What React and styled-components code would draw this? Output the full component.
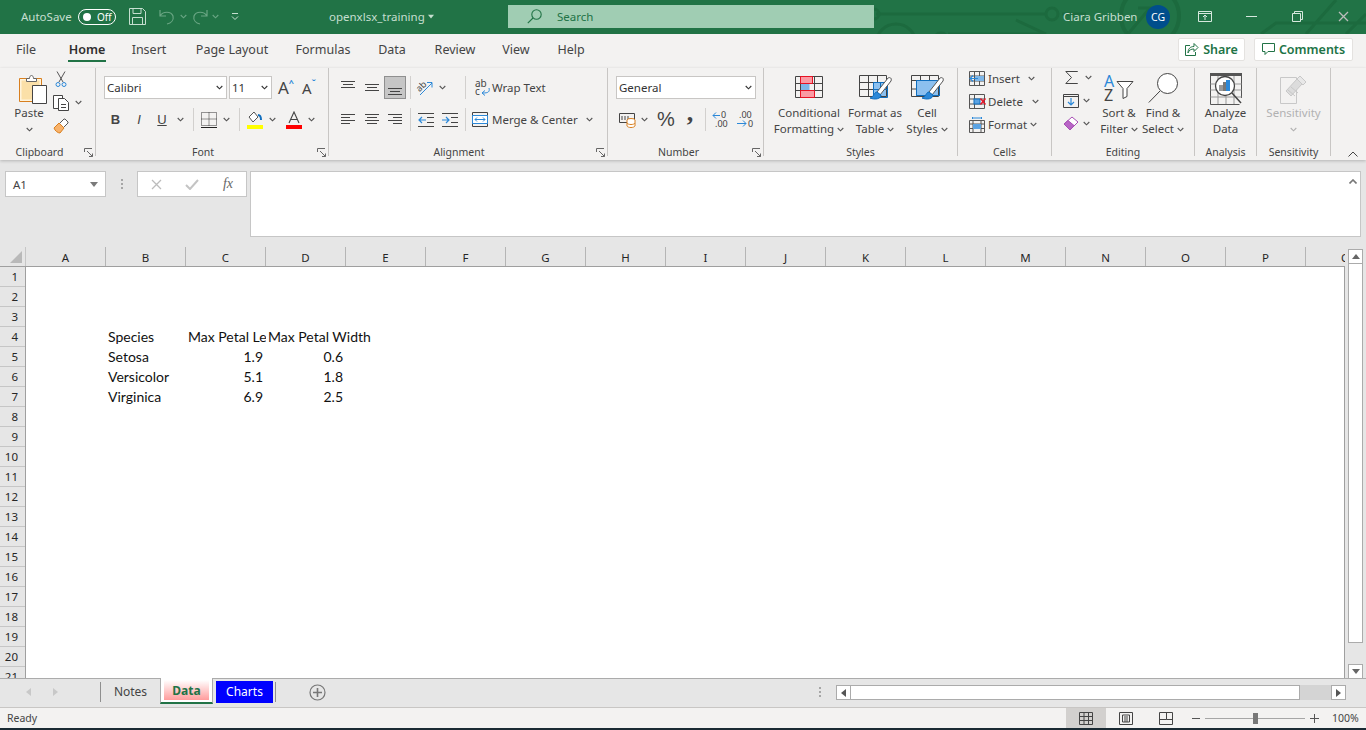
import React from 'react';
import styled, {createGlobalStyle} from 'styled-components';

const green = '#217346';
const ribbonBg = '#f3f2f1';
const chromeBg = '#e6e6e6';
const lineGrey = '#ababab';
const textGrey = '#444444';
const uiFont = '"Noto Sans", "Open Sans", sans-serif';

const Global = createGlobalStyle`
    html, body {
        margin: 0;
        padding: 0;
        height: 100%;
        overflow: hidden;
        background: ${chromeBg};
        font-family: ${uiFont};
    }
    * { box-sizing: border-box; }
`;

const Page = styled.div`
    width: 1366px;
    height: 730px;
    display: flex;
    flex-direction: column;
    overflow: hidden;
`;

/* ---------- title bar ---------- */

const TitleBar = styled.div`
    position: relative;
    flex: 0 0 34px;
    display: flex;
    align-items: center;
    padding-bottom: 1px;
    background: ${green};
    color: #c6dfd0;
    font-size: 11.5px;
    overflow: hidden;
`;

const Circuit = styled.svg`
    position: absolute;
    left: 866px;
    top: 0;
`;

const TitleCell = styled.div`
    position: relative;
    flex: 0 0 ${p => p.$w}px;
    display: flex;
    align-items: center;
    justify-content: ${p => p.$left ? 'flex-start' : 'center'};
    white-space: nowrap;
`;

const Toggle = styled.div`
    position: relative;
    flex: 0 0 38px;
    height: 16px;
    border: 1px solid #fff;
    border-radius: 8px;
    display: flex;
    align-items: center;
    padding-left: 4px;
    gap: 6px;
    color: #fff;
    font-size: 10px;
    &::before {
        content: '';
        width: 8px;
        height: 8px;
        border-radius: 50%;
        background: #fff;
    }
`;

const SearchBox = styled.div`
    position: relative;
    flex: 0 0 366px;
    height: 23px;
    display: flex;
    align-items: center;
    padding-left: 19px;
    gap: 15px;
    background: #a0cdb3;
    color: ${green};
    font-size: 11.5px;
`;

const Avatar = styled.div`
    position: relative;
    flex: 0 0 24px;
    height: 24px;
    border-radius: 50%;
    background: #004e8c;
    color: #fff;
    font-size: 10.5px;
    display: flex;
    align-items: center;
    justify-content: center;
`;

/* ---------- tab row ---------- */

const TabRow = styled.div`
    flex: 0 0 34px;
    display: flex;
    align-items: center;
    padding-bottom: 4px;
    background: ${ribbonBg};
    color: ${textGrey};
`;

const Tab = styled.div`
    position: relative;
    flex: 0 0 ${p => p.$w}px;
    height: 26px;
    margin-left: ${p => p.$ml || 0}px;
    line-height: 28px;
    text-align: center;
    font-size: 12.5px;
    white-space: nowrap;
    font-weight: ${p => p.$active ? 600 : 400};
    color: ${p => p.$active ? '#2f2f2f' : textGrey};
    ${p => p.$active && `
        &::after {
            content: '';
            position: absolute;
            left: 0;
            right: 0;
            bottom: 0;
            height: 2px;
            background: ${green};
        }
    `}
`;

const Spacer = styled.div`
    flex: ${p => p.$w ? `0 0 ${p.$w}px` : 1};
`;

const ActionButton = styled.div`
    flex: 0 0 ${p => p.$w}px;
    height: 23px;
    display: flex;
    align-items: center;
    justify-content: center;
    gap: 4px;
    background: #fff;
    border: 1px solid #e4e2e0;
    border-radius: 2px;
    color: ${green};
    font-size: 12.5px;
    font-weight: 600;
`;

/* ---------- ribbon ---------- */

const Ribbon = styled.div`
    position: relative;
    flex: 0 0 92px;
    display: flex;
    background: ${ribbonBg};
    box-shadow: 0 1px 3px rgba(0, 0, 0, 0.22);
    z-index: 1;
`;

const Group = styled.div`
    position: relative;
    flex: 0 0 ${p => p.$w}px;
    display: flex;
    flex-direction: column;
    padding-right: 1px;
    &::after {
        content: '';
        position: absolute;
        right: 0;
        top: 0;
        bottom: 4px;
        width: 1px;
        background: #c8c6c4;
    }
`;

const GroupBody = styled.div`
    flex: 1;
    display: flex;
    padding-left: ${p => p.$pad || 0}px;
    min-height: 0;
`;

const GroupLabel = styled.div`
    flex: 0 0 16px;
    line-height: 16px;
    padding-right: ${p => p.$shift || 0}px;
    text-align: center;
    font-size: 10.5px;
    color: ${textGrey};
`;

const Launcher = styled.svg`
    position: absolute;
    right: 3px;
    top: 80px;
`;

const Rows = styled.div`
    display: flex;
    flex-direction: column;
    margin-top: ${p => p.$top ?? 8}px;
    gap: ${p => p.$gap ?? 9}px;
    flex: ${p => p.$w ? `0 0 ${p.$w}px` : '0 1 auto'};
`;

const Row = styled.div`
    height: ${p => p.$h || 23}px;
    display: flex;
    align-items: center;
    font-size: 11.5px;
    color: ${textGrey};
    white-space: nowrap;
`;

const Cell = styled.div`
    flex: 0 0 ${p => p.$w}px;
    height: 100%;
    display: flex;
    align-items: center;
    justify-content: center;
    ${p => p.$on && `
        background: #c6c6c6;
        border: 1px solid #8f8f8f;
    `}
`;

const VSep = styled.div`
    flex: 0 0 ${p => p.$w || 1}px;
    display: flex;
    justify-content: center;
    height: 100%;
    &::before {
        content: '';
        width: 1px;
        background: #d2d0ce;
    }
`;

const Select = styled.div`
    flex: 0 0 ${p => p.$w}px;
    height: 23px;
    margin-right: ${p => p.$mr || 0}px;
    display: flex;
    align-items: center;
    justify-content: space-between;
    padding: 0 3px 0 2px;
    background: #fff;
    border: 1px solid #c8c6c4;
    font-size: 11.5px;
    color: #333;
`;

const BigButton = styled.div`
    flex: 0 0 ${p => p.$w}px;
    display: flex;
    flex-direction: column;
    align-items: center;
    padding-top: 4px;
    padding-left: ${p => p.$pad || 0}px;
    font-size: 11.5px;
    line-height: 16px;
    white-space: nowrap;
    color: ${p => p.$off ? '#b1b1b1' : textGrey};
`;

const BigIcon = styled.div`
    height: 33px;
    display: flex;
    align-items: center;
    justify-content: center;
`;

const PasteIcon = styled(BigIcon)`
    padding-left: 8px;
`;

const Line = styled.div`
    height: 16px;
    display: flex;
    align-items: center;
    gap: 3px;
`;

const Collapse = styled.svg`
    position: absolute;
    right: 8px;
    bottom: 3px;
`;

const Percent = styled.span`
    font-family: "Liberation Sans", sans-serif;
    font-size: 20px;
    color: #444;
`;

/* ---------- formula bar ---------- */

const FormulaBar = styled.div`
    flex: 0 0 87px;
    display: flex;
    align-items: flex-start;
    padding: 11px 5px 0;
    background: ${chromeBg};
`;

const NameBox = styled.div`
    flex: 0 0 101px;
    height: 26px;
    display: flex;
    align-items: center;
    justify-content: space-between;
    padding: 0 7px;
    background: #fff;
    border: 1px solid #c6c6c6;
    font-size: 11.5px;
    color: #444;
`;

const Grip = styled.div`
    flex: 0 0 31px;
    height: 26px;
    display: flex;
    align-items: center;
    justify-content: center;
`;

const FormulaButtons = styled.div`
    flex: 0 0 110px;
    height: 26px;
    display: flex;
    align-items: center;
    background: #fff;
    border: 1px solid #c6c6c6;
`;

const FormulaButton = styled.div`
    flex: 1;
    display: flex;
    justify-content: center;
    align-items: center;
    color: #666;
    font-family: "Liberation Serif", serif;
    font-style: italic;
    font-size: 14px;
`;

const FormulaInput = styled.div`
    flex: 0 0 1111px;
    height: 66px;
    margin-left: 3px;
    display: flex;
    justify-content: flex-end;
    align-items: flex-start;
    padding: 7px 3px;
    background: #fff;
    border: 1px solid #c6c6c6;
`;

/* ---------- sheet ---------- */

const Sheet = styled.div`
    flex: 0 0 431px;
    display: flex;
    overflow: hidden;
    background: ${chromeBg};
`;

const SheetMain = styled.div`
    flex: 0 0 1345px;
    display: flex;
    flex-direction: column;
    min-width: 0;
`;

const ColHeaders = styled.div`
    flex: 0 0 20px;
    display: flex;
    overflow: hidden;
    border-bottom: 1px solid #9f9f9f;
`;

const Corner = styled.div`
    flex: 0 0 26px;
    display: flex;
    align-items: flex-end;
    justify-content: flex-end;
    padding: 0 3px 3px 0;
    border-right: 1px solid #c6c6c6;
`;

const ColHeader = styled.div`
    flex: 0 0 80px;
    text-align: center;
    line-height: 21px;
    font-size: 11.5px;
    color: #262626;
    border-right: 1px solid #b5b5b5;
`;

const GridBody = styled.div`
    flex: 1;
    display: flex;
    min-height: 0;
    overflow: hidden;
`;

const RowHeaders = styled.div`
    flex: 0 0 26px;
    display: flex;
    flex-direction: column;
    border-right: 1px solid #9f9f9f;
`;

const RowHeader = styled.div`
    flex: 0 0 20px;
    min-height: 0;
    padding-right: 7px;
    text-align: right;
    line-height: 19px;
    font-size: 11.5px;
    color: #262626;
    border-bottom: 1px solid #c6c6c6;
`;

const Cells = styled.div`
    flex: 1;
    background: #fff;
    display: grid;
    grid-template-columns: repeat(16, 80px);
    grid-auto-rows: 20px;
    border-right: 1px solid #9f9f9f;
`;

const DataCell = styled.div`
    grid-column: ${p => p.$col};
    grid-row: ${p => p.$row};
    padding: 0 ${p => p.$num ? 3 : 2}px 0 2px;
    font-family: Lato, "Liberation Sans", sans-serif;
    font-size: 14px;
    line-height: 20px;
    white-space: nowrap;
    color: #111;
    text-align: ${p => p.$num ? 'right' : 'left'};
    overflow: ${p => p.$clip ? 'hidden' : 'visible'};
`;

const VScroll = styled.div`
    flex: 0 0 21px;
    display: flex;
    flex-direction: column;
    align-items: center;
    padding-top: 2px;
`;

const ScrollBtn = styled.div`
    flex: 0 0 ${p => p.$size}px;
    height: 15px;
    width: ${p => p.$wide || 15}px;
    display: flex;
    align-items: center;
    justify-content: center;
    background: #fff;
    border: 1px solid #ababab;
`;

const VThumb = styled.div`
    flex: 0 0 379px;
    width: 15px;
    background: #fff;
    border: 1px solid #ababab;
    border-top: 0;
`;

const VTrack = styled.div`
    flex: 0 0 21px;
`;

/* ---------- sheet tabs ---------- */

const TabStrip = styled.div`
    position: relative;
    flex: 0 0 29px;
    display: flex;
    align-items: flex-start;
    background: ${chromeBg};
    border-top: 1px solid ${lineGrey};
`;

const NavArrows = styled.div`
    flex: 0 0 100px;
    height: 26px;
    display: flex;
    align-items: center;
    padding-left: 26px;
    gap: 22px;
`;

const SheetTab = styled.div`
    flex: 0 0 ${p => p.$w}px;
    height: 20px;
    margin-top: 3px;
    border-left: 1px solid #8f8f8f;
    text-align: center;
    line-height: 20px;
    font-size: 12px;
    color: #444;
`;

const ActiveTab = styled.div`
    flex: 0 0 53px;
    height: 26px;
    margin-top: -1px;
    padding: 2px 3px;
    background: #fff;
    border: 1px solid ${lineGrey};
    border-top: 0;
    border-bottom: 2px solid ${green};
    & > div {
        height: 100%;
        background: linear-gradient(#ffffff, #ff9c9c);
        text-align: center;
        line-height: 22px;
        font-size: 12px;
        font-weight: 700;
        color: ${green};
    }
`;

const ColorTab = styled.div`
    flex: 0 0 57px;
    height: 22px;
    margin: 2px 2px 0 3px;
    background: ${p => p.$color};
    color: #fff;
    text-align: center;
    line-height: 21px;
    font-size: 12px;
`;

const TabDivider = styled.div`
    flex: 0 0 1px;
    height: 20px;
    margin-top: 3px;
    background: #8f8f8f;
`;

const AddSheet = styled.div`
    flex: 0 0 83px;
    height: 26px;
    display: flex;
    align-items: center;
    justify-content: center;
`;

const HScroll = styled.div`
    position: absolute;
    left: 836px;
    top: 6px;
    width: 510px;
    height: 15px;
    display: flex;
`;

const HThumb = styled.div`
    flex: 0 0 449px;
    background: #fff;
    border: 1px solid ${lineGrey};
    border-left: 0;
`;

const HTrack = styled.div`
    flex: 0 0 31px;
    background: #d4d4d4;
`;

const Dots = styled.div`
    position: absolute;
    left: 819px;
    top: 8px;
    display: flex;
`;

/* ---------- status bar ---------- */

const StatusBar = styled.div`
    flex: 0 0 21px;
    display: flex;
    align-items: stretch;
    background: ${ribbonBg};
    border-top: 1px solid #c8c6c4;
    font-size: 10.5px;
    color: #444;
`;

const StatusText = styled.div`
    padding-left: 7px;
    line-height: 20px;
    flex: 0 0 1066px;
`;

const ViewBtn = styled.div`
    flex: 0 0 40px;
    display: flex;
    align-items: center;
    justify-content: center;
    background: ${p => p.$on ? '#d2d0ce' : 'transparent'};
`;

const ZoomControl = styled.div`
    flex: 1;
    display: flex;
    align-items: center;
    padding-left: 6px;
    gap: 5px;
`;

const Slider = styled.div`
    position: relative;
    flex: 0 0 100px;
    height: 1px;
    background: #a6a6a6;
    &::after {
        content: '';
        position: absolute;
        left: 48px;
        top: -5px;
        width: 5px;
        height: 11px;
        background: #777;
    }
`;

const BottomEdge = styled.div`
    flex: 0 0 3px;
    background: #1a2a33;
`;

/* ---------- icons ---------- */

const Chev = ({c = '#555', s = 7}) => (
    <svg width={s} height={s - 2} viewBox="0 0 7 5"><path d="M.7 1 3.500 3.800 6.300 1" fill="none" stroke={c} strokeWidth="1.1"/></svg>
);

const CaretDown = ({c = '#7a7a7a', w = 8}) => (
    <svg width={w} height="5" viewBox="0 0 8 5"><path d="M0 0h8L4 5z" fill={c}/></svg>
);

const DialogMark = () => (
    <Launcher width="9" height="9" viewBox="0 0 9 9">
        <path d="M.5 4V.5H8M8.500 8.500H5M3 3l5 5M5.500 8.500h3v-3" fill="none" stroke="#666"/>
    </Launcher>
);

const LinesIcon = ({lines}) => (
    <svg width="16" height="16" viewBox="0 0 16 16">
        {lines.map(([x1, x2, yy], i) => <path key={i} d={`M${x1} ${yy}.5H${x2}`} stroke="#444"/>)}
    </svg>
);

const Save = () => (
    <svg width="17" height="17" viewBox="0 0 17 17" fill="none" stroke="#c6dfd0">
        <path d="M.5.500h13l3 3v13H.5zM4 .5v5h8v-5M3.500 16.500v-7h10v7"/>
    </svg>
);

const Undo = ({flip}) => (
    <svg width="16" height="16" viewBox="0 0 16 16" fill="none" stroke="#6aa684" strokeWidth="1.2" style={{transform: flip ? 'scaleX(-1)' : 'none'}}>
        <path d="M1 1v6h6M1 7c3-5 11-5 13 0 1 4-2 7-6 8"/>
    </svg>
);

const Customize = () => (
    <svg width="8" height="8" viewBox="0 0 8 8" fill="none" stroke="#c6dfd0"><path d="M1 .5h6M1 3.500l3 3 3-3"/></svg>
);

const SearchGlass = () => (
    <svg width="15" height="15" viewBox="0 0 15 15" fill="none" stroke={green} strokeWidth="1.1">
        <circle cx="9.500" cy="5.500" r="4.700"/><path d="M6 9 .8 14.200"/>
    </svg>
);

const CircuitArt = () => (
    <Circuit width="500" height="34" viewBox="0 0 500 34" fill="none" stroke="#1c6a3e" strokeWidth="3">
        <path d="M10 14H180M196 14H220"/>
        <circle cx="186" cy="14" r="6"/>
        <circle cx="8" cy="14" r="5"/>
        <circle cx="30" cy="44" r="20"/>
        <circle cx="75" cy="40" r="7"/>
        <path d="M82 34H180M150 20l30 14"/>
        <circle cx="284" cy="16" r="29" strokeWidth="4"/>
        <path d="M262 34 284 8M272 8h14v12"/>
        <path d="M395 34l15-11H500M440 34l30-34M480 34l20-20"/>
    </Circuit>
);

const Paste = () => (
    <svg width="30" height="30" viewBox="0 0 30 30">
        <path d="M1.500 4.500h22v23h-22z" fill="#fff4dc" stroke="#d87f1f"/>
        <path d="M3.500 6.500h18v19h-18z" fill="#fbe0a8"/>
        <path d="M8.500 4.500h3c0-4 4-4 4 0h3v3h-10z" fill="#fff" stroke="#666"/>
        <path d="M14.500 11.500h14v18h-14z" fill="#fff" stroke="#444"/>
    </svg>
);

const Cut = () => (
    <svg width="12" height="17" viewBox="0 0 12 17" fill="none" stroke="#555">
        <path d="M2 .5 8 11M10 .5 4 11"/>
        <circle cx="3" cy="13.500" r="2" stroke="#2b88d8"/><circle cx="9" cy="13.500" r="2" stroke="#2b88d8"/>
    </svg>
);

const Copy = () => (
    <svg width="17" height="16" viewBox="0 0 17 16" fill="#fff" stroke="#444">
        <path d="M.5.500h9v13h-9z"/><path d="M5.500 3.500h6l4 4v8h-10z"/><path d="M8 9.500h5M8 12.500h5"/>
    </svg>
);

const Painter = () => (
    <svg width="16" height="16" viewBox="0 0 16 16">
        <path d="M1 10 6 5l5 5-4 5c-2 0-5-2-6-5z" fill="#f8b26a" stroke="#d87f1f"/>
        <path d="M7 5l4-4 1 0 3 3v1l-4 4" fill="#fff" stroke="#555"/>
    </svg>
);

const Bold = styled.span`
    font-family: "Liberation Sans", sans-serif;
    font-size: 13px;
    color: #444;
    font-weight: ${p => p.$b ? 700 : 400};
    font-style: ${p => p.$i ? 'italic' : 'normal'};
    text-decoration: ${p => p.$u ? 'underline' : 'none'};
`;

const GrowLabel = styled.span`
    position: relative;
    font-size: ${p => p.$size}px;
    color: #444;
    line-height: 20px;
    display: flex;
    &::after {
        content: '${p => p.$mark}';
        font-size: 9px;
        line-height: 10px;
        color: #2b88d8;
        font-weight: 700;
    }
`;

const Borders = () => (
    <svg width="16" height="16" viewBox="0 0 16 16" fill="none">
        <path d="M.5.500h15v13h-15zM8 .5v13M.5 7h15" stroke="#333" strokeDasharray="1 1"/>
        <path d="M0 15.500h16" stroke="#222"/>
    </svg>
);

const Fill = () => (
    <svg width="16" height="18" viewBox="0 0 16 18">
        <path d="M7 1 2 6l4 5 5-5z" fill="#fff" stroke="#555"/>
        <path d="M11 4c2 0 3 2 3 5" fill="none" stroke="#106ebe" strokeWidth="2"/>
        <rect y="14" width="16" height="4" fill="#ffff00"/>
    </svg>
);

const FontColor = () => (
    <svg width="16" height="18" viewBox="0 0 16 18">
        <path d="M3 12 8 1l5 11M5 8.500h6" fill="none" stroke="#444" strokeWidth="1.1"/>
        <rect y="14" width="16" height="4" fill="#ff0000"/>
    </svg>
);

const Orient = () => (
    <svg width="16" height="16" viewBox="0 0 16 16" fill="none" overflow="visible">
        <text x="0" y="10" fontSize="9" fill="#444" fontFamily="Noto Sans" transform="rotate(-45 4 8)">ab</text>
        <path d="M3 15 15 3M10 2.500h5v5" stroke="#2b88d8"/>
    </svg>
);

const Indent = ({flip}) => (
    <svg width="16" height="14" viewBox="0 0 16 14" fill="none">
        <path d="M0 .5h16M0 13.500h16M9 4.500h7M9 9.500h7" stroke="#444"/>
        <path d={flip ? 'M0 7h7M4 4l3 3-3 3' : 'M1 7h7M4 4 1 7l3 3'} stroke="#2b88d8" strokeWidth="1.2"/>
    </svg>
);

const Wrap = () => (
    <svg width="16" height="18" viewBox="0 0 16 18" fill="none" overflow="visible">
        <text x="0" y="8" fontSize="10" fill="#444" fontFamily="Noto Sans">ab</text>
        <text x="0" y="16" fontSize="10" fill="#444" fontFamily="Noto Sans">c</text>
        <path d="M14 9c1 4-1 5-6 5M10 11.500l-3 2.500 3 2.500" stroke="#2b88d8"/>
    </svg>
);

const Merge = () => (
    <svg width="16" height="15" viewBox="0 0 16 15" fill="none">
        <path d="M.5.500h15v14H.5z" stroke="#444"/><path d="M.5 3.500h15v8H.5z" fill="#fff" stroke="#2b88d8"/>
        <path d="M3 7.500h10M5 5.500l-2 2 2 2M11 5.500l2 2-2 2" stroke="#2b88d8"/>
    </svg>
);

const Accounting = () => (
    <svg width="17" height="17" viewBox="0 0 17 17" fill="none">
        <path d="M.5 2.500h15v9H.5z" stroke="#444"/><path d="M3 5v4M6 5v4M9 5v4" stroke="#444"/>
        <ellipse cx="12" cy="9" rx="4" ry="1.500" fill="#fff" stroke="#d87f1f"/>
        <path d="M8 9v6c1 2 7 2 8 0V9M8 12c1 2 7 2 8 0" fill="#fff" stroke="#d87f1f"/>
    </svg>
);

const Decimal = ({more}) => (
    <svg width="18" height="17" viewBox="0 0 18 17" fill="none" overflow="visible">
        <text x={more ? 9 : 3} y="7" fontSize="9" fill="#444" fontFamily="Noto Sans">{more ? '0' : '.00'}</text>
        <text x={more ? 3 : 12} y="16" fontSize="9" fill="#444" fontFamily="Noto Sans">{more ? '.00' : '0'}</text>
        <path d={more ? 'M8 4.500H1M4 1.500l-3 3 3 3' : 'M1 12.500h9M7 9.500l3 3-3 3'} stroke="#2b88d8"/>
    </svg>
);

const Comma = styled.span`
    font-family: "Liberation Serif", serif;
    font-size: 26px;
    font-weight: 700;
    line-height: 10px;
    color: #444;
    height: 24px;
`;

const Conditional = () => (
    <svg width="28" height="26" viewBox="0 0 28 26" fill="none" stroke="#444">
        <path d="M5.500 7.500h9v7h-9z" fill="#7db6e8" stroke="none"/>
        <path d="M5.500.5h12v7h-12zM5.500 14.500h14v7h-14z" fill="#fa9aa3" stroke="#e81123"/>
        <path d="M.5.500h27v21H.5zM.5 7.500h27M.5 14.500h27M5.500.5v21M19.500.5v21"/>
        <path d="M5.500.5h12v7h-12zM5.500 14.500h14v7h-14z" stroke="#e81123"/>
    </svg>
);

const Brush = () => (
    <>
        <path d="M29 3 18 17l3 3L32 6c1-3-1-4-3-3z" fill="#fff" stroke="#555"/>
        <path d="M18 17c-3 0-3 5-7 6 5 2 11 1 11-3z" fill="#2b88d8" stroke="#106ebe"/>
    </>
);

const TableFormat = () => (
    <svg width="33" height="27" viewBox="0 0 33 27" fill="none">
        <path d="M14.500 7.500h14v15h-14z" fill="#8cc0ef"/>
        <path d="M.5.500h27v21H.5zM.5 7.500h27M.5 14.500h14M9.500.5v21M18.500.5v7" stroke="#444"/>
        <path d="M14.500 7.500h14v15h-14zM14.500 14.500h14M21.500 7.500v15" stroke="#106ebe"/>
        <Brush/>
    </svg>
);

const CellStyles = () => (
    <svg width="33" height="27" viewBox="0 0 33 27" fill="none">
        <path d="M5.500 5.500h23v15h-23z" fill="#8cc0ef" stroke="#106ebe"/>
        <path d="M.5.500h27v21H.5zM.5 5.500h5M.5 14h5M9.500.5v5M18.500.5v5" stroke="#444"/>
        <path d="M5.500 5.500h23v15h-23z" stroke="#106ebe"/>
        <Brush/>
    </svg>
);

const CellInsert = () => (
    <svg width="16" height="15" viewBox="0 0 16 15" fill="none">
        <path d="M.5.500h15v14H.5zM.5 5h15M.5 10h15M5.500.5v14M10.500.5v14" stroke="#555"/>
        <rect x="6" y="5" width="9" height="5" fill="#7db6e8"/>
        <path d="M9 7.500H1M4 4.500l-3 3 3 3" stroke="#2b88d8" strokeWidth="1.2"/>
    </svg>
);

const CellDelete = () => (
    <svg width="17" height="15" viewBox="0 0 17 15" fill="none">
        <path d="M.5.500h15v14H.5zM.5 5h15M.5 10h15M5.500.5v14" stroke="#555"/>
        <rect x="5" y="5" width="6" height="5" fill="#5ba3e3" stroke="#106ebe"/>
        <path d="M11.500 4.500l5 6M16.500 4.500l-5 6" stroke="#e81123" strokeWidth="1.3"/>
    </svg>
);

const CellFormat = () => (
    <svg width="16" height="16" viewBox="0 0 16 16" fill="none">
        <path d="M.5 3.500h15v12H.5zM.5 7h15M.5 11.500h15M4 3.500v12M12 3.500v12" stroke="#555"/>
        <rect x="4" y="7" width="8" height="5" fill="#5ba3e3"/>
        <path d="M3.500 1h9M3.500 0v2M12.500 0v2" stroke="#2b88d8"/>
    </svg>
);

const Sigma = () => (
    <svg width="13" height="13" viewBox="0 0 13 13" fill="none" stroke="#444"><path d="M12.500 1V.5H.8L6.500 6.500.8 12.500h11.700V12"/></svg>
);

const FillDown = () => (
    <svg width="16" height="14" viewBox="0 0 16 14" fill="none">
        <path d="M.5.500h15v13H.5z" stroke="#444"/><path d="M.5 2.500h15" stroke="#444"/>
        <path d="M8 4v7M5 8l3 3 3-3" stroke="#2b88d8" strokeWidth="1.2"/>
    </svg>
);

const Eraser = () => (
    <svg width="16" height="15" viewBox="0 0 16 15">
        <path d="M1 8 9 1l6 5-8 8z" fill="#fff" stroke="#a74db4"/>
        <path d="M1 8 5 4.500l6 5L7 14z" fill="#b865c6" stroke="#a74db4"/>
    </svg>
);

const SortFilter = () => (
    <svg width="30" height="30" viewBox="0 0 30 30" fill="none" overflow="visible">
        <text x="0" y="13" fontSize="16" fill="#2b88d8" fontFamily="Noto Sans">A</text>
        <text x="0" y="27" fontSize="16" fill="#444" fontFamily="Noto Sans">Z</text>
        <path d="M13 7.500h16l-6 7v8l-4 2v-10z" fill="#fff" stroke="#444"/>
    </svg>
);

const FindGlass = () => (
    <svg width="30" height="31" viewBox="0 0 30 31" fill="#fff" stroke="#444">
        <circle cx="19.500" cy="10.500" r="10"/><path d="M12 18 .8 29.500"/>
    </svg>
);

const AnalyzeIcon = () => (
    <svg width="32" height="32" viewBox="0 0 32 32" fill="none">
        <rect width="32" height="3" fill="#555"/>
        <path d="M.5 3v28.500h29M31.500 3v22" stroke="#555"/>
        <path d="M.5 11h31M.5 17h31M.5 24h31M8 3v28M16 3v28M24 3v28" stroke="#999"/>
        <circle cx="15" cy="13" r="9.500" fill="#fff" stroke="#444" strokeWidth="1.3"/>
        <rect x="9" y="12" width="4" height="6" fill="#999"/><rect x="13" y="9" width="3" height="9" fill="#777"/><rect x="16" y="7" width="4" height="11" fill="#2b88d8"/>
        <path d="M22 20 31 30" stroke="#444" strokeWidth="1.5"/>
    </svg>
);

const SensitivityIcon = () => (
    <svg width="27" height="30" viewBox="0 0 27 30" fill="none" stroke="#c8c8c8">
        <path d="M.5 3.500h16v26H.5z" fill="#f3f2f1"/>
        <path d="M6 17 17 5l5 5-11 12z" fill="#dcdcdc"/>
        <path d="M17 5l3-3 6 6-3 3z" fill="#e8e8e8"/>
        <path d="M8 16l7 6M11 13l7 6" />
    </svg>
);

const CloseX = ({c = '#bcbcbc'}) => (
    <svg width="11" height="11" viewBox="0 0 11 11" fill="none" stroke={c} strokeWidth="1.3"><path d="M1 1l9 9M10 1l-9 9"/></svg>
);

const Check = () => (
    <svg width="14" height="11" viewBox="0 0 14 11" fill="none" stroke="#c4c4c4" strokeWidth="2"><path d="M1 6l4 4 8-9"/></svg>
);

const Arrow = ({dir, c = '#666'}) => {
    const d = {up: 'M0 5 4 0l4 5z', down: 'M0 0h8L4 5z', right: 'M0 0l5 4-5 4z', left: 'M5 0 0 4l5 4z'}[dir];
    const big = dir === 'up' || dir === 'down';
    return <svg width={big ? 8 : 5} height={big ? 5 : 8} viewBox={big ? '0 0 8 5' : '0 0 5 8'}><path d={d} fill={c}/></svg>;
};

const GripDots = () => (
    <svg width="2" height="10" viewBox="0 0 2 10" fill="#a6a6a6"><rect width="2" height="2"/><rect y="4" width="2" height="2"/><rect y="8" width="2" height="2"/></svg>
);

/* ---------- data ---------- */

const tabs = [
    {name: 'File', w: 52},
    {name: 'Home', w: 38, ml: 16, active: true},
    {name: 'Insert', w: 86},
    {name: 'Page Layout', w: 80},
    {name: 'Formulas', w: 102},
    {name: 'Data', w: 36},
    {name: 'Review', w: 90},
    {name: 'View', w: 32},
    {name: 'Help', w: 78},
];

const columns = ['A', 'B', 'C', 'D', 'E', 'F', 'G', 'H', 'I', 'J', 'K', 'L', 'M', 'N', 'O', 'P', 'Q'];
const rowNumbers = Array.from({length: 21}, (_, i) => i + 1);

const cells = [
    {col: 2, row: 4, text: 'Species'},
    {col: 3, row: 4, text: 'Max Petal Length', clip: true},
    {col: 4, row: 4, text: 'Max Petal Width'},
    {col: 2, row: 5, text: 'Setosa'},
    {col: 3, row: 5, text: '1.9', num: true},
    {col: 4, row: 5, text: '0.6', num: true},
    {col: 2, row: 6, text: 'Versicolor'},
    {col: 3, row: 6, text: '5.1', num: true},
    {col: 4, row: 6, text: '1.8', num: true},
    {col: 2, row: 7, text: 'Virginica'},
    {col: 3, row: 7, text: '6.9', num: true},
    {col: 4, row: 7, text: '2.5', num: true},
];

const alignTop = [[1, 15, 1], [3, 13, 4], [1, 15, 7]];
const alignMid = [[1, 15, 4], [3, 13, 7], [1, 15, 10]];
const alignBot = [[1, 15, 8], [3, 13, 11], [1, 15, 14]];
const left = [[1, 15, 2], [1, 10, 5], [1, 15, 8], [1, 10, 11]];
const center = [[1, 15, 2], [3, 13, 5], [1, 15, 8], [3, 13, 11]];
const right = [[1, 15, 2], [6, 15, 5], [1, 15, 8], [6, 15, 11]];

const App = () => {
    return (
        <Page>
            <Global />
            <TitleBar>
                <CircuitArt />
                <TitleCell $w={21} />
                <TitleCell $w={57} $left>AutoSave</TitleCell>
                <Toggle>Off</Toggle>
                <TitleCell $w={13} />
                <TitleCell $w={17}><Save /></TitleCell>
                <TitleCell $w={13} />
                <TitleCell $w={16}><Undo /></TitleCell>
                <TitleCell $w={17}><Chev c="#6aa684" /></TitleCell>
                <TitleCell $w={16}><Undo flip /></TitleCell>
                <TitleCell $w={15}><Chev c="#6aa684" /></TitleCell>
                <TitleCell $w={23}><Customize /></TitleCell>
                <TitleCell $w={83} />
                <TitleCell $w={96} $left>openxlsx_training</TitleCell>
                <TitleCell $w={12}><CaretDown c="#c6dfd0" w={6} /></TitleCell>
                <TitleCell $w={71} />
                <SearchBox><SearchGlass />Search</SearchBox>
                <TitleCell $w={189} />
                <TitleCell $w={83} $left>Ciara Gribben</TitleCell>
                <Avatar>CG</Avatar>
                <TitleCell $w={12} />
                <TitleCell $w={46}>
                    <svg width="14" height="11" viewBox="0 0 14 11" fill="none" stroke="#d7e8de"><path d="M.5.500h13v10H.5zM.5 2.500h13M7 9V4.500M5 6l2-2 2 2"/></svg>
                </TitleCell>
                <TitleCell $w={46}>
                    <svg width="11" height="1" viewBox="0 0 11 1"><path d="M0 .5h11" stroke="#d7e8de"/></svg>
                </TitleCell>
                <TitleCell $w={46}>
                    <svg width="11" height="11" viewBox="0 0 11 11" fill="none" stroke="#d7e8de"><path d="M.5 2.500h8v8h-8zM2.500 2.500v-2h8v8h-2"/></svg>
                </TitleCell>
                <TitleCell $w={46}><CloseX /></TitleCell>
            </TitleBar>

            <TabRow>
                {tabs.map(t => <Tab key={t.name} $w={t.w} $ml={t.ml} $active={t.active}>{t.name}</Tab>)}
                <Spacer />
                <ActionButton $w={67}>
                    <svg width="14" height="13" viewBox="0 0 14 13" fill="none" stroke={green}><path d="M9 .5l4 4-4 4V6C6 6 4 7 3 10c0-4 2-6.500 6-6.500zM5 2.500H.5v10h10V9"/></svg>
                    Share
                </ActionButton>
                <Spacer $w={9} />
                <ActionButton $w={99}>
                    <svg width="13" height="12" viewBox="0 0 13 12" fill="none" stroke={green}><path d="M.5.500h12v8H6l-3 3v-3H.5z"/></svg>
                    Comments
                </ActionButton>
                <Spacer $w={13} />
            </TabRow>

            <Ribbon>
                <Group $w={96}>
                    <GroupBody>
                        <BigButton $w={48} $pad={10}>
                            <PasteIcon><Paste /></PasteIcon>
                            <Line>Paste</Line>
                            <Line><Chev /></Line>
                        </BigButton>
                        <Rows $top={0} $gap={0}>
                            <Row><Cell $w={26}><Cut /></Cell></Row>
                            <Row><Cell $w={26}><Copy /></Cell><Cell $w={8}><Chev /></Cell></Row>
                            <Row><Cell $w={26}><Painter /></Cell></Row>
                        </Rows>
                    </GroupBody>
                    <GroupLabel $shift={16}>Clipboard</GroupLabel>
                    <DialogMark />
                </Group>

                <Group $w={233}>
                    <GroupBody $pad={8}>
                        <Rows>
                            <Row>
                                <Select $w={123} $mr={2}>Calibri<Chev c="#333" /></Select>
                                <Select $w={43} $mr={4}>11<Chev c="#333" /></Select>
                                <Cell $w={20}><GrowLabel $mark="^" $size={17}>A</GrowLabel></Cell>
                                <Cell $w={26}><GrowLabel $mark="ˇ" $size={15}>A</GrowLabel></Cell>
                            </Row>
                            <Row>
                                <Cell $w={23}><Bold $b>B</Bold></Cell>
                                <Cell $w={24}><Bold $i>I</Bold></Cell>
                                <Cell $w={22}><Bold $u>U</Bold></Cell>
                                <Cell $w={14}><Chev /></Cell>
                                <VSep $w={12} />
                                <Cell $w={20}><Borders /></Cell>
                                <Cell $w={14}><Chev /></Cell>
                                <VSep $w={12} />
                                <Cell $w={20}><Fill /></Cell>
                                <Cell $w={14}><Chev /></Cell>
                                <Spacer $w={5} />
                                <Cell $w={20}><FontColor /></Cell>
                                <Cell $w={14}><Chev /></Cell>
                            </Row>
                        </Rows>
                    </GroupBody>
                    <GroupLabel $shift={18}>Font</GroupLabel>
                    <DialogMark />
                </Group>

                <Group $w={279}>
                    <GroupBody $pad={7}>
                        <Rows>
                            <Row>
                                <Cell $w={24}><LinesIcon lines={alignTop} /></Cell>
                                <Cell $w={24}><LinesIcon lines={alignMid} /></Cell>
                                <Cell $w={22} $on><LinesIcon lines={alignBot} /></Cell>
                                <VSep $w={8} />
                                <Cell $w={22}><Orient /></Cell>
                                <Cell $w={12}><Chev /></Cell>
                                <Spacer $w={7} />
                                <VSep $w={20} />
                                <Cell $w={14}><Wrap /></Cell>
                                <Spacer $w={1} />
                                Wrap Text
                            </Row>
                            <Row>
                                <Cell $w={24}><LinesIcon lines={left} /></Cell>
                                <Cell $w={24}><LinesIcon lines={center} /></Cell>
                                <Cell $w={22}><LinesIcon lines={right} /></Cell>
                                <VSep $w={8} />
                                <Cell $w={24}><Indent /></Cell>
                                <Cell $w={24}><Indent flip /></Cell>
                                <VSep $w={6} />
                                <Spacer $w={4} />
                                <Cell $w={16}><Merge /></Cell>
                                <Spacer $w={4} />
                                Merge &amp; Center
                                <Spacer $w={8} />
                                <Chev />
                            </Row>
                        </Rows>
                    </GroupBody>
                    <GroupLabel $shift={18}>Alignment</GroupLabel>
                    <DialogMark />
                </Group>

                <Group $w={156}>
                    <GroupBody $pad={8}>
                        <Rows>
                            <Row><Select $w={140}>General<Chev c="#333" /></Select></Row>
                            <Row>
                                <Cell $w={22}><Accounting /></Cell>
                                <Cell $w={12}><Chev /></Cell>
                                <Cell $w={32}><Percent>%</Percent></Cell>
                                <Cell $w={16}><Comma>,</Comma></Cell>
                                <VSep $w={14} />
                                <Cell $w={18}><Decimal more /></Cell>
                                <Spacer $w={4} />
                                <Cell $w={22}><Decimal /></Cell>
                            </Row>
                        </Rows>
                    </GroupBody>
                    <GroupLabel $shift={14}>Number</GroupLabel>
                    <DialogMark />
                </Group>

                <Group $w={194}>
                    <GroupBody $pad={8}>
                        <BigButton $w={74}>
                            <BigIcon><Conditional /></BigIcon>
                            <Line>Conditional</Line>
                            <Line>Formatting <Chev /></Line>
                        </BigButton>
                        <BigButton $w={58}>
                            <BigIcon><TableFormat /></BigIcon>
                            <Line>Format as</Line>
                            <Line>Table <Chev /></Line>
                        </BigButton>
                        <BigButton $w={46}>
                            <BigIcon><CellStyles /></BigIcon>
                            <Line>Cell</Line>
                            <Line>Styles <Chev /></Line>
                        </BigButton>
                    </GroupBody>
                    <GroupLabel>Styles</GroupLabel>
                </Group>

                <Group $w={94}>
                    <GroupBody $pad={11}>
                        <Rows $top={-1} $gap={0}>
                            <Row><CellInsert /><Spacer $w={3} />Insert<Spacer $w={8} /><Chev /></Row>
                            <Row><CellDelete /><Spacer $w={2} />Delete<Spacer $w={9} /><Chev /></Row>
                            <Row><CellFormat /><Spacer $w={3} />Format<Spacer $w={3} /><Chev /></Row>
                        </Rows>
                    </GroupBody>
                    <GroupLabel>Cells</GroupLabel>
                </Group>

                <Group $w={143}>
                    <GroupBody $pad={10}>
                        <Rows $top={-2} $gap={0} $w={36}>
                            <Row><Cell $w={18}><Sigma /></Cell><Spacer $w={5} /><Chev /></Row>
                            <Row><Cell $w={18}><FillDown /></Cell><Spacer $w={3} /><Chev /></Row>
                            <Row><Cell $w={18}><Eraser /></Cell><Spacer $w={3} /><Chev /></Row>
                        </Rows>
                        <BigButton $w={42}>
                            <BigIcon><SortFilter /></BigIcon>
                            <Line>Sort &amp;</Line>
                            <Line>Filter <Chev /></Line>
                        </BigButton>
                        <BigButton $w={46}>
                            <BigIcon><FindGlass /></BigIcon>
                            <Line>Find &amp;</Line>
                            <Line>Select <Chev /></Line>
                        </BigButton>
                    </GroupBody>
                    <GroupLabel>Editing</GroupLabel>
                </Group>

                <Group $w={62}>
                    <GroupBody>
                        <BigButton $w={61}>
                            <BigIcon><AnalyzeIcon /></BigIcon>
                            <Line>Analyze</Line>
                            <Line>Data</Line>
                        </BigButton>
                    </GroupBody>
                    <GroupLabel>Analysis</GroupLabel>
                </Group>

                <Group $w={74}>
                    <GroupBody>
                        <BigButton $w={73} $off>
                            <BigIcon><SensitivityIcon /></BigIcon>
                            <Line>Sensitivity</Line>
                            <Line><Chev c="#b1b1b1" /></Line>
                        </BigButton>
                    </GroupBody>
                    <GroupLabel>Sensitivity</GroupLabel>
                </Group>

                <Collapse width="10" height="6" viewBox="0 0 10 6" fill="none" stroke="#444"><path d="M.5 5.500 5 1l4.500 4.500"/></Collapse>
            </Ribbon>

            <FormulaBar>
                <NameBox>A1<CaretDown /></NameBox>
                <Grip><GripDots /></Grip>
                <FormulaButtons>
                    <FormulaButton><CloseX /></FormulaButton>
                    <FormulaButton><Check /></FormulaButton>
                    <FormulaButton>fx</FormulaButton>
                </FormulaButtons>
                <FormulaInput>
                    <svg width="8" height="5" viewBox="0 0 8 5" fill="none" stroke="#777" strokeWidth="1.6"><path d="M.5 4.500 4 1l3.500 3.500"/></svg>
                </FormulaInput>
            </FormulaBar>

            <Sheet>
                <SheetMain>
                    <ColHeaders>
                        <Corner>
                            <svg width="12" height="12" viewBox="0 0 12 12"><path d="M12 0v12H0z" fill="#b9b9b9"/></svg>
                        </Corner>
                        {columns.map(c => <ColHeader key={c}>{c}</ColHeader>)}
                    </ColHeaders>
                    <GridBody>
                        <RowHeaders>
                            {rowNumbers.map(n => <RowHeader key={n}>{n}</RowHeader>)}
                        </RowHeaders>
                        <Cells>
                            {cells.map(c => (
                                <DataCell key={`${c.col}-${c.row}`} $col={c.col} $row={c.row} $num={c.num} $clip={c.clip}>{c.text}</DataCell>
                            ))}
                        </Cells>
                    </GridBody>
                </SheetMain>
                <VScroll>
                    <ScrollBtn $size={15}><Arrow dir="up" /></ScrollBtn>
                    <VThumb />
                    <VTrack />
                    <ScrollBtn $size={15}><Arrow dir="down" /></ScrollBtn>
                </VScroll>
            </Sheet>

            <TabStrip>
                <NavArrows>
                    <Arrow dir="left" c="#c8c8c8" />
                    <Arrow dir="right" c="#c8c8c8" />
                </NavArrows>
                <SheetTab $w={60}>Notes</SheetTab>
                <ActiveTab><div>Data</div></ActiveTab>
                <ColorTab $color="#0000ff">Charts</ColorTab>
                <TabDivider />
                <AddSheet>
                    <svg width="17" height="17" viewBox="0 0 17 17" fill="none" stroke="#777"><circle cx="8.500" cy="8.500" r="7.500" strokeWidth="1.2"/><path d="M4 8.500h9M8.500 4v9" strokeWidth="1.6"/></svg>
                </AddSheet>
                <Dots><GripDots /></Dots>
                <HScroll>
                    <ScrollBtn $size={15}><Arrow dir="left" c="#555" /></ScrollBtn>
                    <HThumb />
                    <HTrack />
                    <ScrollBtn $size={15}><Arrow dir="right" c="#555" /></ScrollBtn>
                </HScroll>
            </TabStrip>

            <StatusBar>
                <StatusText>Ready</StatusText>
                <ViewBtn $on>
                    <svg width="14" height="13" viewBox="0 0 14 13" fill="none" stroke="#444"><path d="M.5.500h13v12H.5zM.5 4.500h13M.5 8.500h13M5 .5v12M9.500.5v12"/></svg>
                </ViewBtn>
                <ViewBtn>
                    <svg width="14" height="13" viewBox="0 0 14 13" fill="none" stroke="#444"><path d="M.5.500h13v12H.5zM3.500 3h7v7h-7zM5 5h4M5 7h4M5 9h4"/></svg>
                </ViewBtn>
                <ViewBtn>
                    <svg width="14" height="13" viewBox="0 0 14 13" fill="none" stroke="#444"><path d="M.5.500h13v12H.5zM.5 7.500h7V.5M7.500 7.500h6"/></svg>
                </ViewBtn>
                <ZoomControl>
                    <svg width="8" height="1" viewBox="0 0 8 1"><path d="M0 .5h8" stroke="#555"/></svg>
                    <Slider />
                    <svg width="9" height="9" viewBox="0 0 9 9"><path d="M0 4.500h9M4.500 0v9" stroke="#555"/></svg>
                    <Spacer $w={3} />
                    100%
                </ZoomControl>
            </StatusBar>
            <BottomEdge />
        </Page>
    );
};

export default App;
